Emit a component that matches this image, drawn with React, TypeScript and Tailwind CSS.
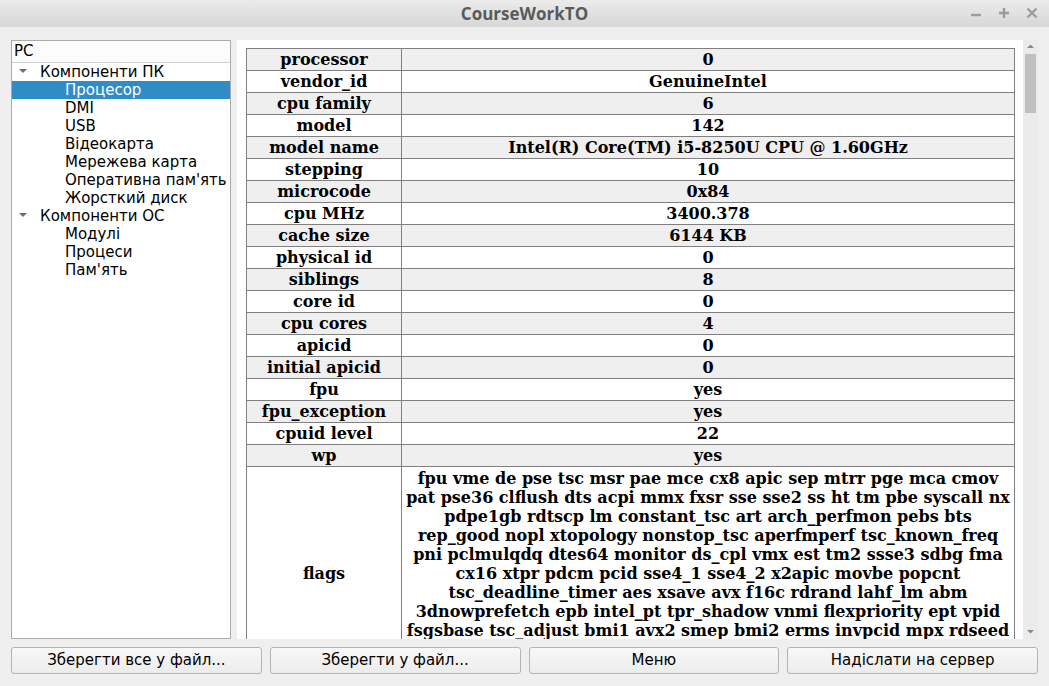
import React from 'react'

const rows: [string, string][] = [
  ['processor', '0'],
  ['vendor_id', 'GenuineIntel'],
  ['cpu family', '6'],
  ['model', '142'],
  ['model name', 'Intel(R) Core(TM) i5-8250U CPU @ 1.60GHz'],
  ['stepping', '10'],
  ['microcode', '0x84'],
  ['cpu MHz', '3400.378'],
  ['cache size', '6144 KB'],
  ['physical id', '0'],
  ['siblings', '8'],
  ['core id', '0'],
  ['cpu cores', '4'],
  ['apicid', '0'],
  ['initial apicid', '0'],
  ['fpu', 'yes'],
  ['fpu_exception', 'yes'],
  ['cpuid level', '22'],
  ['wp', 'yes'],
]

// only the lines that fit in the viewport; the row keeps its full height
const flagLines = [
  'fpu vme de pse tsc msr pae mce cx8 apic sep mtrr pge mca cmov',
  'pat pse36 clflush dts acpi mmx fxsr sse sse2 ss ht tm pbe syscall nx',
  'pdpe1gb rdtscp lm constant_tsc art arch_perfmon pebs bts',
  'rep_good nopl xtopology nonstop_tsc aperfmperf tsc_known_freq',
  'pni pclmulqdq dtes64 monitor ds_cpl vmx est tm2 ssse3 sdbg fma',
  'cx16 xtpr pdcm pcid sse4_1 sse4_2 x2apic movbe popcnt',
  'tsc_deadline_timer aes xsave avx f16c rdrand lahf_lm abm',
  '3dnowprefetch epb intel_pt tpr_shadow vnmi flexpriority ept vpid',
  'fsgsbase tsc_adjust bmi1 avx2 smep bmi2 erms invpcid mpx rdseed',
]

const treeItems: { label: string; level: number; selected?: boolean }[] = [
  { label: 'Компоненти ПК', level: 0 },
  { label: 'Процесор', level: 1, selected: true },
  { label: 'DMI', level: 1 },
  { label: 'USB', level: 1 },
  { label: 'Відеокарта', level: 1 },
  { label: 'Мережева карта', level: 1 },
  { label: "Оперативна пам'ять", level: 1 },
  { label: 'Жорсткий диск', level: 1 },
  { label: 'Компоненти ОС', level: 0 },
  { label: 'Модулі', level: 1 },
  { label: 'Процеси', level: 1 },
  { label: "Пам'ять", level: 1 },
]

const buttons = ['Зберегти все у файл...', 'Зберегти у файл...', 'Меню', 'Надіслати на сервер']

function TitleBar() {
  return (
    <div className="relative h-[27px] flex items-center justify-center bg-gradient-to-b from-[#ebebeb] to-[#d7d7d7]">
      <span className="text-[17px] font-bold text-[#5a5a5a] font-['Open_Sans',sans-serif]">CourseWorkTO</span>
      {/* window controls */}
      <div className="absolute right-[11px] top-[7px] flex gap-[16px]">
        <svg width="12" height="12" viewBox="0 0 12 12">
          <path d="M1 8h10" stroke="#9c9c9c" strokeWidth="2.4" />
        </svg>
        <svg width="12" height="12" viewBox="0 0 12 12">
          <path d="M1 6h10M6 1v10" stroke="#9c9c9c" strokeWidth="2.4" />
        </svg>
        <svg width="12" height="12" viewBox="0 0 12 12">
          <path d="M1.5 1.5l9 9M10.5 1.5l-9 9" stroke="#9c9c9c" strokeWidth="2.4" />
        </svg>
      </div>
    </div>
  )
}

function Tree() {
  return (
    <div className="w-[220px] shrink-0 border border-[#ababab] bg-white font-['DejaVu_Sans',sans-serif] text-[15px] text-black">
      <div className="h-[22px] flex items-center pl-[2px] border-b border-[#d2d2d2] bg-[#fcfcfc]">PC</div>
      <div>
        {treeItems.map((it) => (
          <div
            key={it.label}
            className={
              'h-[18px] flex items-center leading-none whitespace-nowrap ' +
              (it.selected ? 'bg-[#308cc6] text-white' : '')
            }
          >
            {it.level === 0 ? (
              <>
                <svg width="28" height="18" viewBox="0 0 28 18" className="shrink-0">
                  <path d="M7 6h8l-4 4z" fill="#6e6e6e" />
                </svg>
                <span>{it.label}</span>
              </>
            ) : (
              <span className="pl-[53px]">{it.label}</span>
            )}
          </div>
        ))}
      </div>
    </div>
  )
}

function InfoTable() {
  return (
    <table className="table-fixed border-collapse w-[769px] font-['DejaVu_Serif',serif] font-bold text-[16px] text-black text-center">
      <colgroup>
        <col className="w-[155px]" />
        <col />
      </colgroup>
      <tbody>
        {rows.map(([k, v], i) => (
          <tr key={k} className={(i % 2 === 0 ? 'bg-[#efefef]' : 'bg-white') + ' h-[22px]'}>
            <td className="border border-[#808080] p-0 leading-[19px]">{k}</td>
            <td className="border border-[#808080] p-0 leading-[19px]">{v}</td>
          </tr>
        ))}
        <tr className="bg-white h-[214px]">
          <td className="border border-[#808080] p-0 leading-[19px]">flags</td>
          <td className="border border-[#808080] pt-[2px] px-0 leading-[19px] align-top">
            {flagLines.map((l) => (
              <div key={l}>{l}</div>
            ))}
          </td>
        </tr>
      </tbody>
    </table>
  )
}

function ScrollBar() {
  return (
    <div className="w-[15px] shrink-0 bg-[#ebebeb] flex flex-col items-center">
      <svg width="15" height="14" viewBox="0 0 15 14" className="shrink-0">
        <path d="M4 8h7L7.5 4.5z" fill="#8a8a8a" />
      </svg>
      <div className="w-[11px] h-[59px] bg-[#c0c0c0]" />
      <div className="flex-1" />
      <svg width="15" height="14" viewBox="0 0 15 14" className="shrink-0">
        <path d="M4 5h7L7.5 8.5z" fill="#8a8a8a" />
      </svg>
    </div>
  )
}

export default function App() {
  return (
    <div className="w-[1049px] h-[686px] flex flex-col bg-[#efefef] overflow-hidden">
      <TitleBar />
      <div className="flex-1 min-h-0 flex gap-[6px] pl-[11px] pr-[11px] pt-[13px]">
        <Tree />
        <div className="flex-1 min-w-0 flex">
          <div className="flex-1 min-w-0 bg-white overflow-hidden pl-[9px] pt-[8px]">
            <InfoTable />
          </div>
          <ScrollBar />
        </div>
      </div>
      <div className="flex gap-[8px] px-[11px] pt-[8px] pb-[12px]">
        {buttons.map((b) => (
          <button
            key={b}
            className="flex-1 h-[27px] rounded-[3px] border border-[#b4b4b4] bg-gradient-to-b from-[#f8f8f8] to-[#ececec] font-['DejaVu_Sans',sans-serif] text-[15px] text-black"
          >
            {b}
          </button>
        ))}
      </div>
    </div>
  )
}
